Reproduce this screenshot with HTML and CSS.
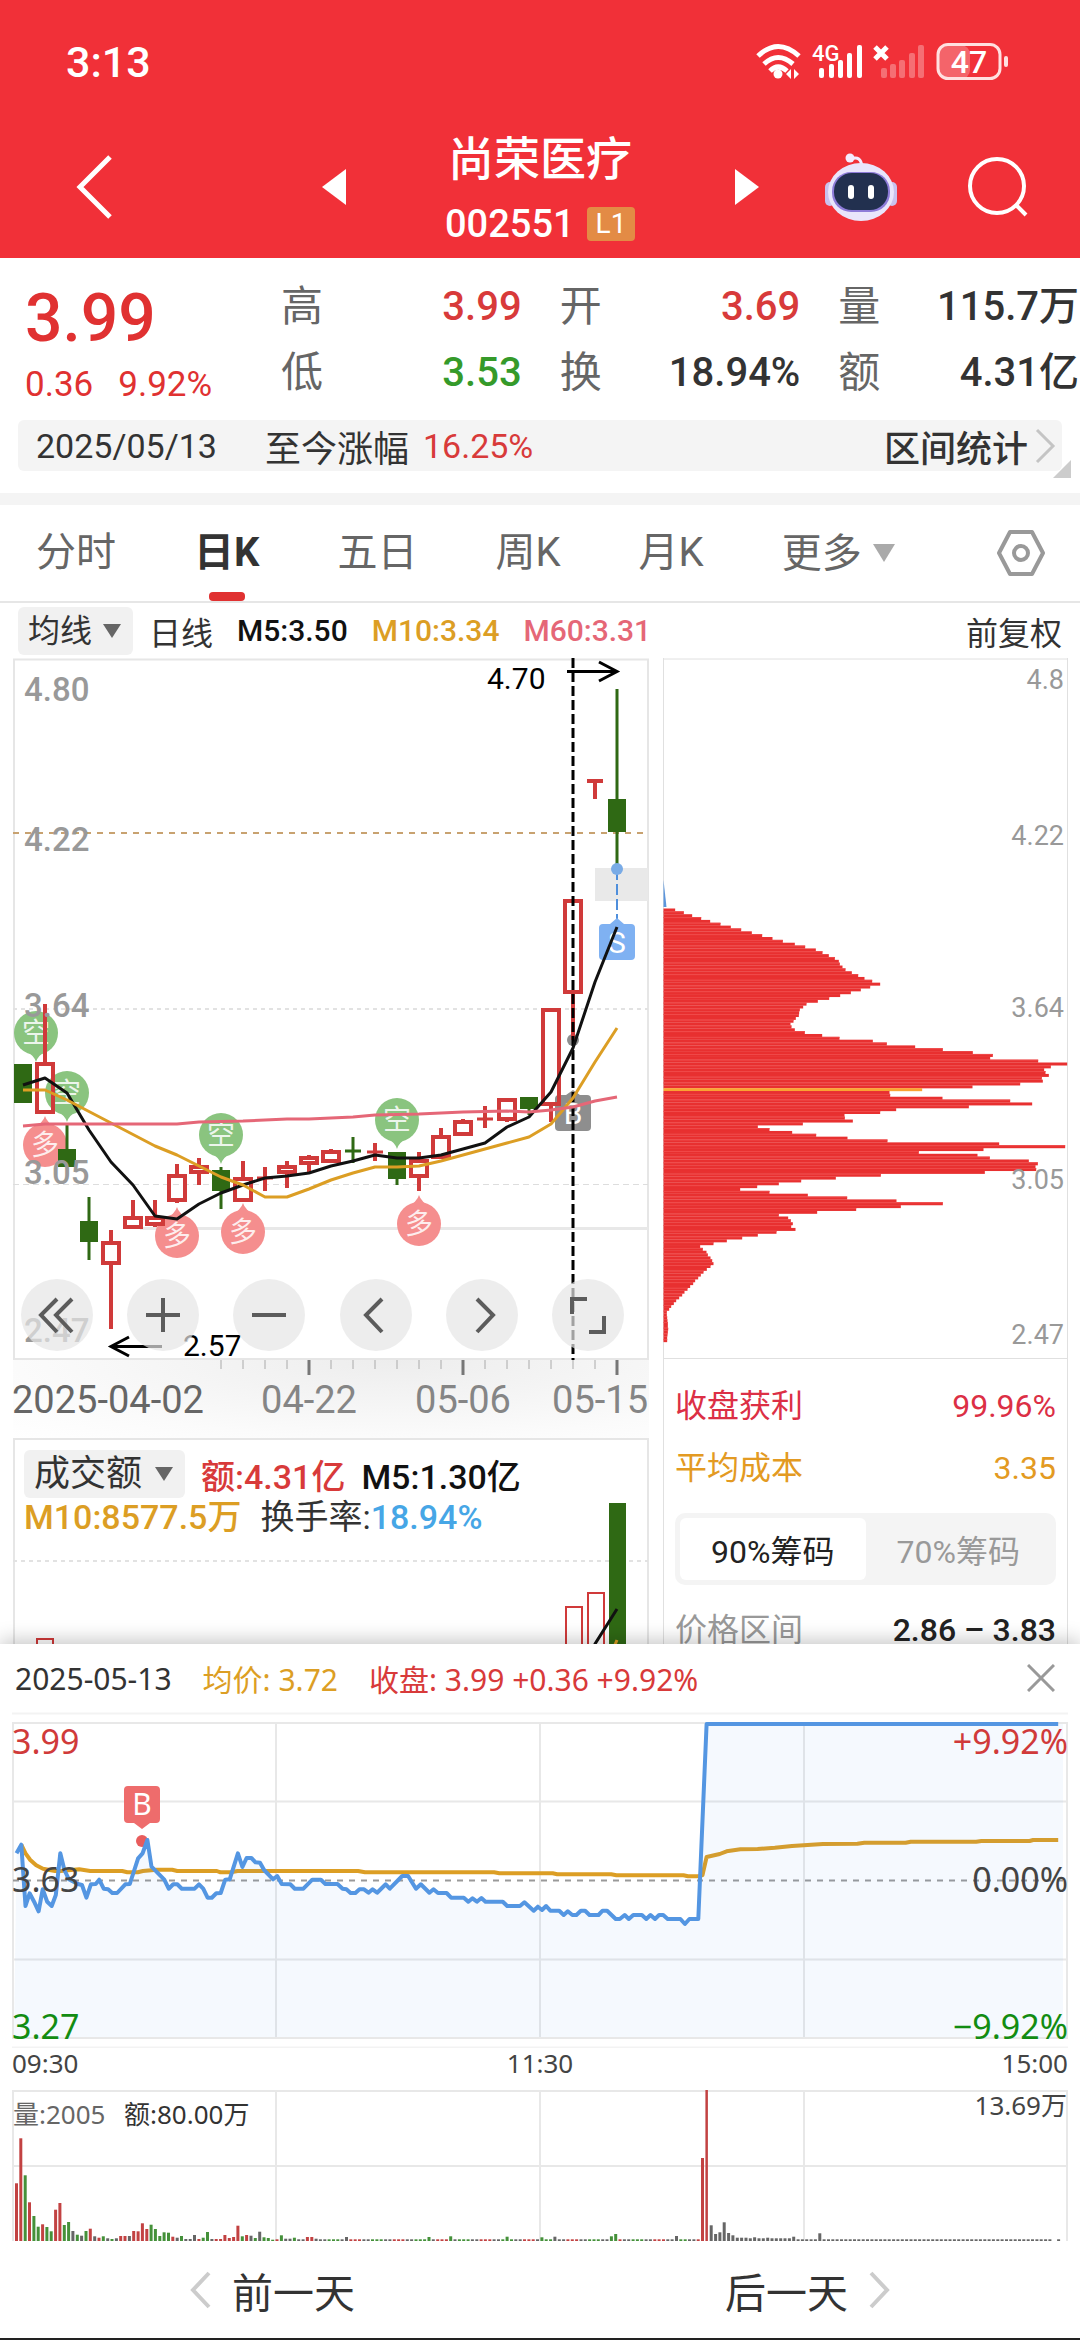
FILE: index.html
```html
<!DOCTYPE html>
<html lang="zh-CN">
<head>
<meta charset="utf-8">
<meta name="viewport" content="width=device-width">
<title>尚荣医疗 002551</title>
<link rel="stylesheet" href="styles.css">
</head>
<body>
<div class="app">
  <header class="top">
    <div class="status">
      <span class="clock">3:13</span>
      <svg class="status-icons" width="254" height="40" viewBox="756 40 254 40" aria-hidden="true">
        <g fill="none" stroke="#fff" stroke-width="5">
          <path d="M758 54q20-19 41 0"/><path d="M764 62q14-13 29 0"/><path d="M770 69q8-8 17 0"/>
        </g>
        <circle cx="778" cy="72" r="4.500" fill="#fff"/>
        <path d="M786 72l5-5v10zM799 72l-5-5v10z" fill="#fff"/>
        <g fill="#fff">
          <rect x="819" y="66" width="5" height="10" rx="2"/><rect x="829" y="62" width="5" height="14" rx="2"/><rect x="838" y="58" width="5" height="18" rx="2"/><rect x="847" y="51" width="5" height="25" rx="2"/><rect x="857" y="43" width="5" height="33" rx="2"/>
        </g>
        <text x="812" y="59" class="net">4G</text>
        <path d="M875 45l12 12M887 45l-12 12" stroke="#fff" stroke-width="5"/>
        <g fill="#fff" opacity=".3">
          <rect x="881" y="66" width="6" height="10" rx="2"/><rect x="890" y="62" width="6" height="14" rx="2"/><rect x="899" y="58" width="6" height="18" rx="2"/><rect x="909" y="51" width="6" height="25" rx="2"/><rect x="918" y="43" width="6" height="33" rx="2"/>
        </g>
        <rect x="938" y="43" width="32" height="34" rx="9" fill="#fff" opacity=".25"/>
        <rect x="938" y="42.500" width="62" height="34" rx="10" fill="none" stroke="#ffe0e0" stroke-width="3"/>
        <rect x="1004" y="54" width="4" height="11" rx="2" fill="#ffe0e0"/>
        <text x="969" y="71" text-anchor="middle" class="bat">47</text>
      </svg>
    </div>
    <div class="nav">
      <div class="nav-left">
        <button class="icon" aria-label="返回"><svg width="42" height="68" viewBox="0 0 42 68"><path d="M37 4L7 34l30 30" fill="none" stroke="#fff" stroke-width="5"/></svg></button>
        <button class="icon" aria-label="上一只"><svg width="24" height="36" viewBox="0 0 24 36"><path d="M24 0v36L0 18z" fill="#fff"/></svg></button>
      </div>
      <div class="title">
        <h1>尚荣医疗</h1>
        <p><span>002551</span><b>L1</b></p>
      </div>
      <div class="nav-right">
        <button class="icon" aria-label="下一只"><svg width="24" height="36" viewBox="0 0 24 36"><path d="M0 0v36l24-18z" fill="#fff"/></svg></button>
        <button class="icon" aria-label="助手">
          <svg width="74" height="70" viewBox="0 0 74 70">
            <path d="M27 7q10-4 11 8" fill="none" stroke="#f4ecff" stroke-width="3"/><circle cx="26" cy="6" r="4.500" fill="#f4ecff"/>
            <rect x="1" y="30" width="10" height="24" rx="5" fill="#c9c2ee"/><rect x="63" y="30" width="10" height="24" rx="5" fill="#c9c2ee"/>
            <ellipse cx="37" cy="40" rx="33" ry="29" fill="#e9e5fb"/>
            <rect x="8" y="20" width="58" height="40" rx="19" fill="#8d7bd8"/>
            <rect x="10" y="21" width="54" height="37" rx="18" fill="#22304f"/>
            <rect x="24" y="33" width="6" height="14" rx="3" fill="#fff"/><rect x="44" y="33" width="6" height="14" rx="3" fill="#fff"/>
          </svg>
        </button>
        <button class="icon" aria-label="搜索"><svg width="62" height="62" viewBox="0 0 62 62"><circle cx="30" cy="30" r="27" fill="none" stroke="#fff" stroke-width="4"/><path d="M49 49l10 10" stroke="#fff" stroke-width="4"/></svg></button>
      </div>
    </div>
  </header>

  <section class="quote">
    <div class="stats">
      <div class="price"><strong>3.99</strong><p><span>0.36</span><span>9.92%</span></p></div>
      <dl><div><dt>高</dt><dd class="up">3.99</dd></div><div><dt>低</dt><dd class="down">3.53</dd></div></dl>
      <dl><div><dt>开</dt><dd class="up">3.69</dd></div><div><dt>换</dt><dd>18.94%</dd></div></dl>
      <dl><div><dt>量</dt><dd>115.7万</dd></div><div><dt>额</dt><dd>4.31亿</dd></div></dl>
    </div>
    <div class="range">
      <span class="num">2025/05/13</span>
      <span class="since">至今涨幅</span>
      <span class="num up">16.25%</span>
      <a href="#range">区间统计<svg width="22" height="36" viewBox="0 0 22 36"><path d="M3 2l16 16L3 34" fill="none" stroke="#c4c4c4" stroke-width="3"/></svg></a>
      <i class="fold"></i>
    </div>
  </section>

  <nav class="tabs">
    <button>分时</button><button class="on">日K</button><button>五日</button><button>周K</button><button>月K</button>
    <span class="drop more"><select aria-label="更多周期"><option>更多</option></select></span>
    <button class="gear" aria-label="设置"><svg width="50" height="48" viewBox="0 0 50 48"><path d="M14 3h22l11 21-11 21H14L3 24z" fill="none" stroke="#999" stroke-width="4" stroke-linejoin="round"/><circle cx="25" cy="24" r="7" fill="none" stroke="#999" stroke-width="4"/></svg></button>
  </nav>

  <div class="ma">
    <span class="drop chip"><select aria-label="主图指标"><option>均线</option></select></span>
    <span>日线</span>
    <span class="ink">M5:3.50</span><span class="gold">M10:3.34</span><span class="pink">M60:3.31</span>
    <span class="adj">前复权</span>
  </div>

  <main class="charts">
    <div class="left">
      <div class="kwrap">
        <svg class="kline" viewBox="13 658 636 702" role="img" aria-label="日K线">
          <g fill="none">
            <path d="M14 659.500H648V1359H14z" stroke="#e6e6e6" stroke-width="2"/>
            <path d="M13 833H648" stroke="#c8a270" stroke-width="2" stroke-dasharray="6 6"/>
            <path d="M13 1009H648" stroke="#e2e2e2" stroke-width="2" stroke-dasharray="4 4"/>
            <path d="M13 1184.500H648" stroke="#ddd" stroke-dasharray="6 4"/>
            <path d="M140 1228.500H648" stroke="#e8e8e8" stroke-width="3"/>
          </g>
          <rect x="595" y="868" width="53" height="33" fill="#e9e9e9"/>
          <g id="marks"></g>
          <path d="M617 869V920" stroke="#4f8fdc" stroke-width="2" stroke-dasharray="11 4"/>
          <path d="M603 924h7l7-6 7 6h7q4 0 4 4v28q0 4-4 4h-28q-4 0-4-4v-28q0-4 4-4z" fill="#7fb1f2"/>
          <text x="617" y="953" text-anchor="middle" class="badge">S</text>
          <path d="M559 1095h7l7-5 7 5h7q4 0 4 4v28q0 4-4 4h-28q-4 0-4-4v-28q0-4 4-4z" fill="#8e8e8e"/>
          <text x="573" y="1124" text-anchor="middle" class="badge">B</text>
          <circle cx="573" cy="1040" r="6" fill="#8e8e8e"/>
          <g id="candles"></g>
          <circle cx="617" cy="869" r="6" fill="#79abe6"/>
          <path d="M587 781h16M595 781v18" stroke="#d03a3a" stroke-width="4"/>
          <g class="ylab">
            <text x="24" y="701">4.80</text><text x="24" y="851">4.22</text><text x="24" y="1017">3.64</text><text x="24" y="1184">3.05</text><text x="24" y="1342">2.47</text>
          </g>
          <path d="M573 658V1360" stroke="#000" stroke-width="3" stroke-dasharray="10 4"/>
          <g id="averages" fill="none" stroke-width="3" stroke-linejoin="round"></g>
          <g fill="none" stroke="#000" stroke-width="3"><path d="M567 671.500h49M599 662l18 9.500-18 9.500"/><path d="M162 1346.500h-50M129 1337l-18 9.500 18 9.500"/></g>
          <text x="487" y="689" class="ext">4.70</text><text x="183" y="1356" class="ext">2.57</text>
        </svg>
        <div class="tools">
          <button aria-label="最早"><svg viewBox="0 0 72 72"><path d="M36 20L20 36l16 17M51 20L35 36l16 17"/></svg></button>
          <button aria-label="放大"><svg viewBox="0 0 72 72"><path d="M36 19v34M19 36h34"/></svg></button>
          <button aria-label="缩小"><svg viewBox="0 0 72 72"><path d="M19 36h34"/></svg></button>
          <button aria-label="左移"><svg viewBox="0 0 72 72"><path d="M42 20L26 36l16 17"/></svg></button>
          <button aria-label="右移"><svg viewBox="0 0 72 72"><path d="M31 20l16 16-16 17"/></svg></button>
          <button aria-label="全屏"><svg viewBox="0 0 72 72"><path d="M20 35V20h15M52 37v16H37"/></svg></button>
        </div>
      </div>
      <svg class="axis" viewBox="13 1360 636 78">
        <g id="ticks"></g>
        <g class="dates"><text x="12" y="1413" fill="#666">2025-04-02</text><text x="309" y="1413" text-anchor="middle">04-22</text><text x="463" y="1413" text-anchor="middle">05-06</text><text x="648" y="1413" text-anchor="end">05-15</text></g>
      </svg>
      <div class="vol">
        <svg viewBox="13 1438 636 300" role="img" aria-label="成交额">
          <path d="M14 1800V1439H648V1800" fill="none" stroke="#e6e6e6" stroke-width="2"/>
          <path d="M13 1561H648" stroke="#e2e2e2" stroke-width="2" stroke-dasharray="4 4"/>
          <rect x="609" y="1503" width="17" height="230" fill="#2f6914"/>
          <g fill="#fff" stroke="#d03a3a" stroke-width="2"><rect x="588" y="1593" width="16" height="140"/><rect x="566" y="1607" width="16" height="126"/><rect x="37" y="1639" width="16" height="94"/></g>
          <path d="M584 1680l11-36 22-35" fill="none" stroke="#111" stroke-width="3"/>
          <path d="M600 1680l17-40" stroke="#dc9e24" stroke-width="3"/>
        </svg>
        <div class="legend">
          <p><span class="drop chip"><select aria-label="副图指标"><option>成交额</option></select></span><span class="up">额:4.31亿</span><span class="ink">M5:1.30亿</span></p>
          <p><span class="gold">M10:8577.5万</span><span>换手率:<em>18.94%</em></span></p>
        </div>
      </div>
    </div>
    <aside class="right">
      <svg class="chips" viewBox="663 658 405 702" role="img" aria-label="筹码分布">
        <path d="M663 659H1068M663 1358.500H1068" stroke="#e0e0e0" stroke-width="1"/>
        <path d="M663.500 880l3 27h-3z" fill="#5b95dc"/>
        <g id="chipbars"></g>
        <g class="clab" text-anchor="end"><text x="1064" y="689">4.8</text><text x="1064" y="845">4.22</text><text x="1064" y="1017">3.64</text><text x="1064" y="1189">3.05</text><text x="1064" y="1344">2.47</text></g>
      </svg>
      <dl class="cost">
        <div class="crim"><dt>收盘获利</dt><dd>99.96%</dd></div>
        <div class="amber"><dt>平均成本</dt><dd>3.35</dd></div>
      </dl>
      <div class="seg"><button class="on">90%筹码</button><button>70%筹码</button></div>
      <dl class="cost"><div class="band"><dt>价格区间</dt><dd>2.86 – 3.83</dd></div></dl>
    </aside>
  </main>

  <section class="sheet">
    <header>
      <span>2025-05-13</span><span class="gold">均价: 3.72</span><span class="up">收盘: 3.99 +0.36 +9.92%</span>
      <button class="icon" aria-label="关闭"><svg width="28" height="28" viewBox="0 0 28 28"><path d="M1 1l26 26M27 1L1 27" stroke="#999" stroke-width="3"/></svg></button>
    </header>
    <svg class="minute" viewBox="0 1712 1080 336" role="img" aria-label="分时走势">
      <path d="M12 1713.500H1068M12 2047.500H1068" stroke="#f3f3f3" stroke-width="2"/>
      <path d="M13 1723H1067V2038H13zM276 1723V2038M540 1723V2038M804 1723V2038M13 1801.500H1067M13 1959.500H1067" fill="none" stroke="#e8e8e8" stroke-width="2"/>
      <path d="M13 1880.500H1067" stroke="#999" stroke-width="2" stroke-dasharray="6 6"/>
      <g id="minute" fill="none" stroke-linejoin="round"></g>
      <path d="M128 1786h28q4 0 4 4v29q0 4-4 4h-6l-8 6-8-6h-6q-4 0-4-4v-29q0-4 4-4z" fill="#ee6c6c"/>
      <text x="142" y="1815" text-anchor="middle" class="badge">B</text>
      <g class="plab"><text x="12" y="1754" class="up">3.99</text><text x="12" y="1892">3.63</text><text x="12" y="2039" class="down">3.27</text>
      <g text-anchor="end"><text x="1068" y="1754" class="up">+9.92%</text><text x="1068" y="1892">0.00%</text><text x="1068" y="2039" class="down">−9.92%</text></g></g>
    </svg>
    <div class="times"><span>09:30</span><span>11:30</span><span>15:00</span></div>
    <svg class="minvol" viewBox="0 2090 1080 152" role="img" aria-label="分时成交量">
      <path d="M13 2241V2091H1067V2241M276 2091V2241M540 2091V2241M804 2091V2241M13 2166H1067" fill="none" stroke="#e8e8e8" stroke-width="2"/>
      <g id="minvol"></g>
      <text x="13" y="2124" fill="#666">量:2005</text><text x="124" y="2124" fill="#333">额:80.00万</text><text x="1067" y="2115" text-anchor="end" fill="#444">13.69万</text>
    </svg>
    <footer>
      <button><svg width="22" height="38" viewBox="0 0 22 38"><path d="M19 2L3 19l16 17"/></svg>前一天</button>
      <button>后一天<svg width="22" height="38" viewBox="0 0 22 38"><path d="M3 2l16 17L3 36"/></svg></button>
    </footer>
  </section>
</div>
<script src="charts.js"></script>
</body>
</html>
```

FILE: styles.css
```css
* { box-sizing: border-box; }
body, h1, p, dl, dd { margin: 0; }
body {
  font-family: Roboto, "Noto Sans CJK SC", sans-serif;
  color: #333;
  background: #fff;
}
button, select {
  font: inherit; color: inherit; background: none; border: 0; padding: 0; margin: 0;
  appearance: none; cursor: pointer;
}
svg { display: block; }
em { font-style: normal; }
.app { position: relative; min-height: 100vh; overflow: hidden; }
.up { color: #d83a3a; fill: #d03a3a; }
.down { color: #359a2a; fill: #128c12; }
.gold { color: #dc9e24; }
.pink { color: #e56777; }
.ink { color: #111; }

/* header */
.top { background: #f13038; color: #fff; height: 258px; }
.status { display: flex; justify-content: space-between; align-items: center; padding: 40px 70px 0 66px; }
.clock { font-size: 43px; line-height: 44px; font-weight: 500; }
.net { font-size: 22px; font-weight: 500; fill: #fff; }
.bat { font-size: 32px; font-weight: 500; fill: #fff; }
.nav { display: grid; grid-template-columns: 1fr 190px 1fr; margin-top: 38px; }
.nav-left, .nav-right { display: flex; align-items: center; }
.nav-left { justify-content: space-between; padding: 0 99px 0 73px; }
.nav-right { padding-left: 100px; gap: 65px; }
.nav-right .icon:first-child + .icon { margin-right: 4px; }
.title { text-align: center; }
.title h1 { font-size: 46px; line-height: 74px; font-weight: 500; }
.title p { display: flex; justify-content: space-between; align-items: center; height: 56px; font-size: 38px; font-weight: 500; }
.title b { width: 48px; background: #e38b45; border-radius: 4px; font-size: 28px; line-height: 34px; font-weight: 400; }

/* quote */
.quote { padding: 16px 0 22px; border-bottom: 12px solid #f4f4f4; }
.stats { display: grid; grid-template-columns: 218px 1fr 1fr 1fr; column-gap: 38px; padding: 0 1px 0 25px; }
.price { color: #e03131; white-space: nowrap; }
.price strong { display: block; font-size: 66px; line-height: 90px; font-weight: 500; }
.price p { display: flex; gap: 25px; font-size: 35px; line-height: 42px; }
.stats dl div { display: flex; justify-content: space-between; font-size: 40px; line-height: 66px; white-space: nowrap; }
.stats dt { color: #666; font-size: 42px; }
.stats dd { font-weight: 500; }
.range {
  position: relative; display: flex; align-items: center; height: 51px;
  margin: 14px 18px 0; padding: 0 6px 0 18px; background: #f4f4f4; border-radius: 6px;
  font-size: 36px;
}
.range .num { font-size: 34px; }
.since { margin: 0 14px 0 48px; }
.range a { display: flex; align-items: center; gap: 6px; margin-left: auto; color: inherit; text-decoration: none; font-weight: 500; }
.fold { position: absolute; right: -9px; bottom: -7px; border: 9px solid; border-color: transparent #ccc #ccc transparent; }

/* tabs */
.tabs { display: flex; align-items: center; gap: 78px; height: 98px; padding: 0 34px 0 36px; border-bottom: 2px solid #e6e6e6; font-size: 40px; color: #666; white-space: nowrap; }
.tabs button { position: relative; line-height: 94px; }
.tabs .on { color: #333; font-weight: 700; }
.tabs .on::after { content: ""; position: absolute; left: 50%; bottom: -1px; width: 36px; height: 9px; margin-left: -18px; border-radius: 4px; background: #e03131; }
.tabs .gear { margin-left: auto; }
.drop { position: relative; display: inline-flex; align-items: center; }
.drop::after { content: ""; position: absolute; right: 12px; border: 9px solid transparent; border-top: 14px solid #666; border-bottom: 0; pointer-events: none; }
.more select { padding-right: 34px; }
.more::after { right: 1px; border-width: 18px 11px 0; border-top-color: #aaa; }
.chip { background: #f1f1f1; border-radius: 6px; }
.chip select { padding: 0 40px 0 10px; height: 48px; }

/* moving averages */
.ma { display: flex; align-items: center; height: 55px; padding: 0 18px; font-size: 32px; white-space: nowrap; }
.ma span { font-size: 32px; }
.ma .ink, .ma .gold, .ma .pink { font-size: 30px; font-weight: 500; margin-left: 24px; }
.ma .chip { margin-right: 16px; }
.ma .adj { margin-left: auto; }

/* charts */
.charts { display: grid; grid-template-columns: minmax(0, 636fr) minmax(0, 405fr); column-gap: 14px; padding: 0 12px 0 13px; }
.charts svg { width: 100%; }
.kwrap { position: relative; }
.ylab { font-size: 33px; font-weight: 500; fill: #999; }
.ext { font-size: 30px; }
.badge { font-size: 30px; fill: #fff; }
.mark { font-size: 28px; fill: #fff; fill-opacity: .85; text-anchor: middle; }
.tools { position: absolute; left: 8px; right: 25px; bottom: 9px; display: flex; justify-content: space-between; }
.tools button { width: 72px; height: 72px; border-radius: 50%; background: rgba(230, 230, 230, .7); }
.tools path { fill: none; stroke: #5c5c5c; stroke-width: 4; }
.axis { background: radial-gradient(ellipse at 60% 0, #ededed, #fbfbfb 70%, #fff); }
.dates { font-size: 38px; fill: #858585; }
.vol { position: relative; }
.legend { position: absolute; left: 11px; top: 12px; font-size: 34px; white-space: nowrap; }
.legend p { display: flex; align-items: center; height: 48px; }
.legend p + p { height: 32px; gap: 19px; }
.legend p:first-child { gap: 16px; }
.legend .chip select { font-size: 36px; padding: 0 42px 0 10px; }
.legend .up, .legend .ink, .legend .gold { font-weight: 500; }
.legend em { color: #46a6e6; font-weight: 500; }
.right { box-shadow: inset 1px 0 #e0e0e0, inset -1px 0 #e0e0e0; }
.clab { font-size: 27px; fill: #999; }
.cost { padding: 0 12px; font-size: 32px; }
.cost div { display: flex; justify-content: space-between; line-height: 62px; }
.chips + .cost { padding-top: 15px; }
.crim { color: #dc2f45; }
.amber { color: #e39a22; }
.band dt { color: #999; }
.band dd { font-weight: 500; color: #222; }
.seg { display: grid; grid-template-columns: 1fr 1fr; margin: 14px 12px; padding: 5px; height: 72px; background: #f4f4f4; border-radius: 10px; font-size: 32px; color: #999; }
.seg .on { background: #fff; border-radius: 6px; color: #222; }

/* day detail sheet */
.sheet {
  position: absolute; left: 0; right: 0; bottom: 0; background: #fff;
  font-family: "Noto Sans", "Noto Sans CJK SC", sans-serif;
  border-bottom: 2px solid #222; box-shadow: 0 -4px 18px rgba(0, 0, 0, .22);
}
.sheet header { display: flex; align-items: center; gap: 31px; height: 68px; padding: 0 25px 0 15px; font-size: 30px; white-space: nowrap; }
.sheet header .icon { margin-left: auto; }
.sheet > svg { width: 100%; }
.plab { font-size: 34px; fill: #444; }
.times { display: grid; grid-template-columns: 1fr 1fr 1fr; height: 42px; padding: 0 12px; font-size: 26px; line-height: 30px; color: #444; }
.times span:nth-child(2) { text-align: center; }
.times span:nth-child(3) { text-align: right; }
.minvol { font-size: 26px; }
.sheet footer { display: flex; justify-content: space-between; align-items: center; height: 96px; padding: 0 190px; font-size: 41px; }
.sheet footer button { display: flex; align-items: center; gap: 20px; height: 96px; }
.sheet footer path { fill: none; stroke: #ccc; stroke-width: 4; }
```

FILE: charts.js
```js
const NS = 'http://www.w3.org/2000/svg';
const RED = '#d03a3a', GREEN = '#2f6914';

function add(id, tag, attrs, text) {
  const el = document.createElementNS(NS, tag);
  for (const k in attrs) el.setAttribute(k, attrs[k]);
  if (text) el.textContent = text;
  document.getElementById(id).appendChild(el);
}

// Signal balloons: x, y of the centre, kind
[[36, 1033, '空'], [67, 1093, '空'], [221, 1135, '空'], [397, 1120, '空'],
 [45, 1145, '多'], [177, 1236, '多'], [243, 1232, '多'], [419, 1224, '多']].forEach(([x, y, k]) => {
  const down = k === '空', s = down ? 1 : -1, fill = down ? '#8ac47f' : '#f58e8e';
  add('marks', 'circle', { cx: x, cy: y, r: 22, fill });
  add('marks', 'path', { d: `M${x - 12} ${y + 17 * s}Q${x - 2} ${y + 22 * s} ${x} ${y + 29 * s}Q${x + 2} ${y + 22 * s} ${x + 12} ${y + 17 * s}z`, fill });
  add('marks', 'text', { x, y: y + 10, class: 'mark' }, k);
});

// Daily candles: high, low, body top, body bottom, rising
[[1064, 1103, 1064, 1103, 0], [1004, 1113, 1063, 1113, 1], [1125, 1167, 1149, 1167, 0], [1197, 1260, 1221, 1242, 0],
 [1230, 1329, 1242, 1264, 1], [1200, 1228, 1217, 1228, 1], [1200, 1227, 1217, 1225, 1], [1164, 1203, 1175, 1201, 1],
 [1158, 1185, 1166, 1173, 1], [1167, 1209, 1170, 1191, 0], [1161, 1201, 1178, 1201, 1], [1167, 1191, 1178, 1178, 1],
 [1161, 1188, 1166, 1173, 1], [1155, 1172, 1157, 1164, 1], [1149, 1162, 1151, 1162, 1], [1137, 1163, 1151, 1151, 0],
 [1143, 1161, 1152, 1152, 1], [1152, 1185, 1152, 1179, 0], [1152, 1191, 1160, 1177, 1], [1128, 1158, 1136, 1158, 1],
 [1119, 1135, 1121, 1135, 1], [1106, 1128, 1119, 1119, 1], [1099, 1122, 1099, 1120, 1], [1097, 1115, 1097, 1109, 0],
 [1009, 1122, 1009, 1105, 1], [900, 1040, 900, 993, 1], null, [689, 868, 799, 832, 0]].forEach((c, i) => {
  if (!c) return;
  const [h, l, t, b, up] = c, x = 23 + i * 22, color = up ? RED : GREEN;
  add('candles', 'path', { d: `M${x} ${h}V${t}M${x} ${b}V${l}`, stroke: color, 'stroke-width': up ? 4 : 3 });
  if (t === b) add('candles', 'path', { d: `M${x - 8} ${t}h16`, stroke: color, 'stroke-width': 3 });
  else if (up) add('candles', 'rect', { x: x - 8, y: t + 1, width: 16, height: b - t - 2, fill: 'none', stroke: color, 'stroke-width': 4 });
  else add('candles', 'rect', { x: x - 9, y: t, width: 18, height: b - t, fill: color });
});

[['#111', '23,1085 45,1078 67,1093 89,1130 111,1162 133,1185 155,1216 177,1219 199,1204 221,1193 243,1185 265,1178 287,1176 309,1173 331,1166 353,1161 375,1155 397,1158 419,1158 441,1155 463,1149 485,1143 507,1127 529,1117 551,1092 573,1048 595,982 617,927'],
 ['#dc9e24', '23,1090 45,1090 67,1100 155,1146 177,1155 199,1166 221,1177 243,1185 265,1197 287,1197 309,1189 331,1180 353,1173 375,1167 397,1167 419,1166 441,1161 507,1143 529,1137 551,1124 573,1098 595,1062 617,1028'],
 ['#e56777', '23,1126 45,1124 177,1124 199,1122 243,1121 287,1119 309,1119 353,1117 375,1115 419,1114 463,1112 507,1111 529,1112 551,1110 573,1107 595,1101 617,1097']
].forEach(([stroke, points]) => add('averages', 'polyline', { stroke, points }));

for (let x = 221; x <= 617; x += 22) {
  const major = (x - 309) % 154 === 0;
  add('ticks', 'path', { d: `M${x} 1360v${major ? 15 : 9}`, stroke: major ? '#777' : '#aaa', 'stroke-width': major ? 3 : 1 });
}

// Cost distribution: bar ends in thirds of a unit, from high price to low
const chips = [75,101,126,153,180,211,242,273,305,336,367,398,434,465,497,517,536,554,566,569,577,586,605,624,643,666,690,660,632,602,
570,537,503,469,459,449,447,446,437,430,421,424,434,464,516,568,668,710,795,878,968,1028,1020,1164,1251,1202,1182,1186,1196,1175,
1178,1110,967,816,718,720,877,1080,1146,956,738,690,583,584,608,458,323,358,426,498,592,712,1047,1245,1000,806,982,1019,1136,1163,
1156,1158,1004,692,557,453,386,321,270,358,473,591,739,878,752,618,501,386,414,422,428,423,436,379,323,276,230,190,150,158,
169,173,181,186,190,181,170,160,152,144,135,129,120,112,103,96,87,78,71,63,57,50,50,51,52,53,53,54,53,52,51,51];
chips.forEach((v, i) => {
  const y = 908.5 + i * 2.852, avg = i === 63, w = (v - 40) / 3;
  add('chipbars', 'rect', { x: 663.5, y, width: w, height: 3, fill: avg ? '#faa332' : '#e83030' });
  if (!avg && i % 2) add('chipbars', 'rect', { x: 663.5, y, width: w, height: 1, fill: '#f04a4a' });
});

// Intraday traces
const pt = ([x, y]) => `${(x / 2.904).toFixed(1)},${(1640 + y / 3).toFixed(1)}`;
const pairs = s => s.split(' ').map(p => p.split(',').map(Number));
const price = pairs('48,640 62,614 74,798 86,760 99,785 112,814 124,748 137,785 150,798 162,765 175,640 187,690 200,718 226,732 238,735 251,773 264,733 278,732 288,719 301,746 314,748 326,759 340,759 364,733 377,732 401,655 414,640 428,600 440,680 477,719 490,746 503,733 515,733 528,746 565,746 578,733 590,746 603,773 615,773 628,760 641,759 654,719 667,718 691,640 704,681 716,654 730,654 742,667 755,668 767,690 793,718 805,708 818,732 843,733 856,746 881,746 907,719 932,719 945,732 980,732 995,746 1006,748 1018,759 1032,759 1044,748 1057,748 1070,758 1082,748 1095,758 1120,733 1132,746 1168,708 1185,708 1208,746 1222,733 1247,758 1259,748 1272,759 1297,759 1310,773 1347,773 1360,785 1372,775 1385,785 1398,774 1410,785 1460,785 1473,798 1510,798 1523,787 1550,812 1562,800 1574,810 1586,798 1598,812 1624,812 1637,825 1649,814 1662,825 1674,825 1687,812 1699,812 1712,825 1738,825 1750,812 1763,812 1788,837 1800,837 1814,825 1826,837 1839,825 1864,825 1877,837 1889,825 1902,837 1914,825 1926,825 1939,837 1976,837 1989,852 2002,837 2028,837 2052,252 3073,252');
const mean = pairs('62,614 74,640 88,660 105,676 125,686 160,693 175,693 230,688 262,693 355,693 370,697 400,697 415,693 455,689 500,689 515,693 630,693 640,697 670,697 690,693 1040,693 1060,697 1435,697 1450,700 1605,700 1618,703 1775,703 1790,706 1985,706 1998,709 2028,709 2040,705 2052,651 2090,642 2110,634 2150,628 2200,627 2250,623 2300,618 2390,612 2490,611 2510,608 2630,608 2645,605 2835,605 2850,603 2990,603 3000,600 3073,600');
add('minute', 'polyline', { points: mean.map(pt).join(' '), stroke: '#dc9e24', 'stroke-width': 4 });
add('minute', 'circle', { cx: 142, cy: 1841, r: 6, fill: '#e85c5c' });
add('minute', 'polygon', { points: price.map(pt).join(' ') + ' 1063,1724 1063,2037 14,2037', fill: 'rgba(80,150,235,.06)' });
add('minute', 'polyline', { points: price.map(pt).join(' '), stroke: '#5496e2', 'stroke-width': 4 });

// Intraday volume, one bar per minute: height and r / g / k colour
const open = '173r 308r 197g 116r 75g 43g 50r 42g 29g 94r 114r 48g 57g 30k 19g 16k 30g 37r 14k 10r 14g 8k 6g 8k 15r 15r 15k 30r 29r 53r 36r 49g 36g 15g 26g 25g 13r 10k 15g 6k 6k 18k 6r 10g 27g 6k 6r 6r 18r 9r 12r 46r 14g 18r 16k 9g 28k 11g 9g 4g 5r 17g 7k 7k 10g 5k 5k 12r 12r 7k'.split(' ');
const peaks = { 76: '12k', 95: '12g', 100: '14g', 113: '13g', 121: '11g', 124: '13k', 137: '14g', 138: '21g', 152: '15k', 158: '249r', 159: '453r', 160: '47k', 161: '21k', 162: '26k', 163: '56k', 164: '24k', 165: '17k', 166: '10k', 167: '10k', 168: '10k', 170: '11k', 173: '10k', 179: '13k', 185: '23k' };
const ink = { r: '#c24242', g: '#45913a', k: '#666' };
for (let i = 0; i <= 240; i++) {
  if (i === 239) continue;
  const bar = open[i] || peaks[i] || (i > 159 ? (i < 180 ? '8k' : '5k') : '5' + 'kgkrgkrkgr'[i * 7 % 10]);
  const h = parseInt(bar, 10) / 3;
  add('minvol', 'rect', { x: (15 + i * 4.342).toFixed(1), y: (2241 - h).toFixed(1), width: i === 159 ? 2.5 : 3, height: h.toFixed(1), fill: ink[bar.slice(-1)] });
}
```
